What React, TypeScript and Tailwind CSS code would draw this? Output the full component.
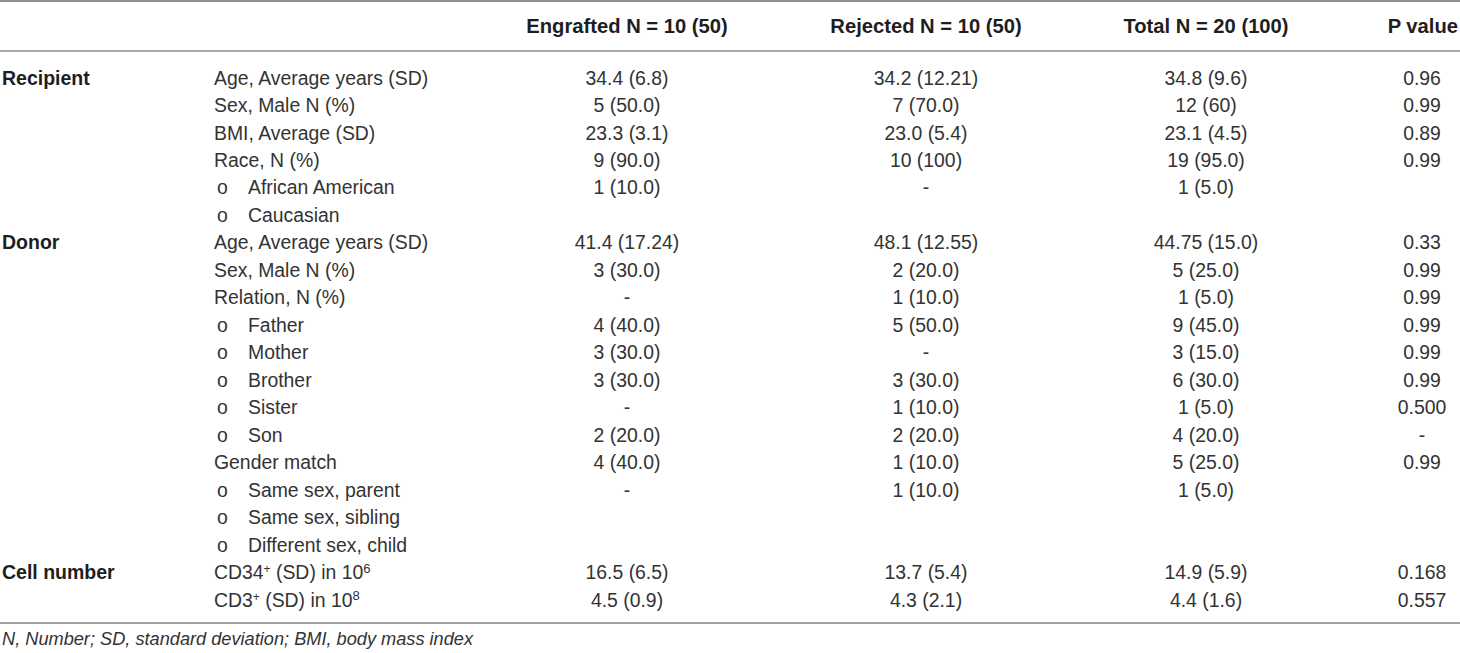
import React from "react";

type Row = {
  group?: string;
  label: React.ReactNode;
  bullet?: boolean;
  v: [string, string, string, string];
};

const rows: Row[] = [
  { group: "Recipient", label: "Age, Average years (SD)", v: ["34.4 (6.8)", "34.2 (12.21)", "34.8 (9.6)", "0.96"] },
  { label: "Sex, Male N (%)", v: ["5 (50.0)", "7 (70.0)", "12 (60)", "0.99"] },
  { label: "BMI, Average (SD)", v: ["23.3 (3.1)", "23.0 (5.4)", "23.1 (4.5)", "0.89"] },
  { label: "Race, N (%)", v: ["9 (90.0)", "10 (100)", "19 (95.0)", "0.99"] },
  { label: "African American", bullet: true, v: ["1 (10.0)", "-", "1 (5.0)", ""] },
  { label: "Caucasian", bullet: true, v: ["", "", "", ""] },
  { group: "Donor", label: "Age, Average years (SD)", v: ["41.4 (17.24)", "48.1 (12.55)", "44.75 (15.0)", "0.33"] },
  { label: "Sex, Male N (%)", v: ["3 (30.0)", "2 (20.0)", "5 (25.0)", "0.99"] },
  { label: "Relation, N (%)", v: ["-", "1 (10.0)", "1 (5.0)", "0.99"] },
  { label: "Father", bullet: true, v: ["4 (40.0)", "5 (50.0)", "9 (45.0)", "0.99"] },
  { label: "Mother", bullet: true, v: ["3 (30.0)", "-", "3 (15.0)", "0.99"] },
  { label: "Brother", bullet: true, v: ["3 (30.0)", "3 (30.0)", "6 (30.0)", "0.99"] },
  { label: "Sister", bullet: true, v: ["-", "1 (10.0)", "1 (5.0)", "0.500"] },
  { label: "Son", bullet: true, v: ["2 (20.0)", "2 (20.0)", "4 (20.0)", "-"] },
  { label: "Gender match", v: ["4 (40.0)", "1 (10.0)", "5 (25.0)", "0.99"] },
  { label: "Same sex, parent", bullet: true, v: ["-", "1 (10.0)", "1 (5.0)", ""] },
  { label: "Same sex, sibling", bullet: true, v: ["", "", "", ""] },
  { label: "Different sex, child", bullet: true, v: ["", "", "", ""] },
  {
    group: "Cell number",
    label: (
      <>
        CD34<sup className="text-[12px]">+</sup> (SD) in 10<sup className="text-[13px]">6</sup>
      </>
    ),
    v: ["16.5 (6.5)", "13.7 (5.4)", "14.9 (5.9)", "0.168"],
  },
  {
    label: (
      <>
        CD3<sup className="text-[12px]">+</sup> (SD) in 10<sup className="text-[13px]">8</sup>
      </>
    ),
    v: ["4.5 (0.9)", "4.3 (2.1)", "4.4 (1.6)", "0.557"],
  },
];

const gridCols = "grid grid-cols-[214px_216px_394px_204px_356px_76px]";

export default function App() {
  return (
    <div
      className="w-[1460px] h-[653px] bg-white text-[#333333] overflow-hidden"
      style={{ fontFamily: '"Liberation Sans", Arial, sans-serif' }}
    >
      <div className="h-[2px] bg-[#8f8f8f]" />
      <div className={`${gridCols} h-[48px] items-center text-[20.2px] font-bold text-[#1e1e1e]`}>
        <div />
        <div />
        <div className="text-center whitespace-nowrap">Engrafted N = 10 (50)</div>
        <div className="text-center whitespace-nowrap">Rejected N = 10 (50)</div>
        <div className="text-center whitespace-nowrap">Total N = 20 (100)</div>
        <div className="flex justify-end pr-[2px] whitespace-nowrap">P value</div>
      </div>
      <div className="h-[2px] bg-[#a8a8a8]" />
      <div className="pt-[11.6px] pb-[9px] text-[19.4px]">
        {rows.map((r, i) => (
          <div key={i} className={`${gridCols} h-[27.47px] items-center`}>
            <div className="pl-[2px] font-bold text-[19.5px] text-[#1e1e1e] whitespace-nowrap">{r.group ?? ""}</div>
            <div className="whitespace-nowrap flex">
              {r.bullet ? (
                <>
                  <span className="w-[34px] pl-[3px]">o</span>
                  <span>{r.label}</span>
                </>
              ) : (
                <span>{r.label}</span>
              )}
            </div>
            {r.v.map((x, j) => (
              <div key={j} className="text-center whitespace-nowrap">
                {x}
              </div>
            ))}
          </div>
        ))}
      </div>
      <div className="h-[2px] bg-[#a0a0a0]" />
      <div className="pl-[2px] pt-[2px] text-[18.2px] italic leading-[27px]">
        N, Number; SD, standard deviation; BMI, body mass index
      </div>
    </div>
  );
}
